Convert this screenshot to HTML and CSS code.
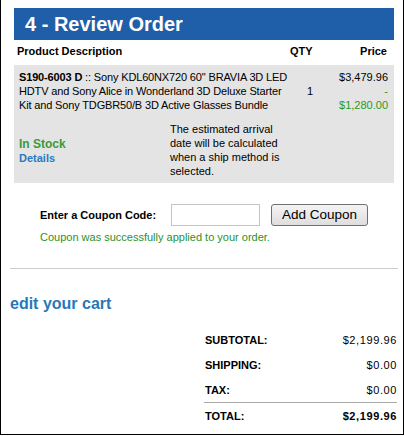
FILE: index.html
```html
<!DOCTYPE html>
<html lang="en">

<head>
  <meta charset="UTF-8" />
  <title>Review Order</title>
  <link rel="stylesheet" href="styles.css">
</head>

<body>
  <div class="pagina">
    <div class="revisao">
      <div class="titulo">4 - Review Order</div>

      <div class="cabecalho">
        <div>Product Description</div>
        <div class="cab-qtd">QTY</div>
        <div class="cab-preco">Price</div>
      </div>

      <div class="item">
        <div class="item-linha">
          <div class="descricao"><b>S190-6003 D</b> :: Sony KDL60NX720 60" BRAVIA 3D LED HDTV and Sony Alice in Wonderland 3D Deluxe Starter Kit and Sony TDGBR50/B 3D Active Glasses Bundle</div>
          <div class="qtd">1</div>
          <div class="preco">
            <div>$3,479.96</div>
            <div class="verde">-</div>
            <div class="verde">$1,280.00</div>
          </div>
        </div>
        <div class="item-linha estoque-linha">
          <div class="estoque">
            <div class="em-estoque">In Stock</div>
            <a class="detalhes" href="#">Details</a>
          </div>
          <div class="chegada">The estimated arrival date will be calculated when a ship method is selected.</div>
        </div>
      </div>
    </div>

    <div class="cupom">
      <div class="cupom-linha">
        <label class="cupom-rotulo" for="codigo">Enter a Coupon Code:</label>
        <input class="cupom-campo" id="codigo" type="text">
        <button class="cupom-botao">Add Coupon</button>
      </div>
      <div class="cupom-msg">Coupon was successfully applied to your order.</div>
    </div>

    <hr class="divisor">

    <a class="editar" href="#">edit your cart</a>

    <div class="totais">
      <div class="total-linha"><span>SUBTOTAL:</span><span class="valor">$2,199.96</span></div>
      <div class="total-linha"><span>SHIPPING:</span><span class="valor">$0.00</span></div>
      <div class="total-linha borda"><span>TAX:</span><span class="valor">$0.00</span></div>
      <div class="total-linha"><span>TOTAL:</span><span class="valor forte">$2,199.96</span></div>
    </div>
  </div>
</body>

</html>
```

FILE: styles.css
```css
body,
html {
  margin: 0;
  padding: 0;
  background: #fff;
  color: #000;
  font-family: 'Liberation Sans', Arial, sans-serif;
}

.pagina {
  width: 404px;
  height: 435px;
  box-sizing: border-box;
  border: 1px solid #000;
  border-top: none;
  overflow: hidden;
}

.revisao {
  margin: 8px 0 0 13px;
  width: 380px;
}

.titulo {
  height: 32px;
  line-height: 32px;
  background-color: #1f5fa9;
  color: #fff;
  font-size: 20px;
  font-weight: bold;
  padding-left: 11px;
}

.cabecalho {
  display: grid;
  grid-template-columns: 273px 46px 1fr;
  height: 25px;
  align-items: center;
  font-size: 11px;
  font-weight: bold;
  padding: 0 7px 3px 3px;
  box-sizing: border-box;
}

.cab-preco {
  text-align: right;
}

.item {
  background-color: #e4e4e4;
  padding: 5px 6px 5px 5px;
}

.item-linha {
  display: grid;
  grid-template-columns: 274px 34px 1fr;
  font-size: 11px;
  line-height: 14px;
}

.descricao {
  letter-spacing: -0.15px;
}

.qtd {
  align-self: center;
  padding-left: 14px;
}

.preco {
  text-align: right;
}

.verde {
  color: #1f9a1f;
}

.estoque-linha {
  grid-template-columns: 151px 120px;
  margin-top: 10px;
}

.estoque {
  align-self: center;
  padding-top: 2px;
}

.em-estoque {
  color: #3a9a3a;
  font-weight: bold;
  font-size: 12px;
  line-height: 13px;
}

.detalhes {
  color: #2a7ac0;
  font-weight: bold;
  font-size: 11px;
  text-decoration: none;
}

.cupom {
  margin-top: 20px;
  padding-left: 39px;
}

.cupom-linha {
  display: flex;
  align-items: center;
  height: 23px;
}

.cupom-rotulo {
  font-size: 11px;
  font-weight: bold;
  width: 131px;
}

.cupom-campo {
  width: 89px;
  height: 22px;
  box-sizing: border-box;
  border: 1px solid #c4c4c4;
  margin: 0;
  padding: 0 3px;
}

.cupom-botao {
  margin-left: 11px;
  width: 97px;
  height: 22px;
  border: 1px solid #707070;
  border-radius: 3px;
  background: linear-gradient(#f4f4f4, #dedede);
  font-family: 'Liberation Sans', Arial, sans-serif;
  font-size: 13.5px;
  color: #000;
  padding: 0;
}

.cupom-msg {
  margin-top: 5px;
  color: #2a922a;
  font-size: 11px;
}

.divisor {
  margin: 25px 5px 0 9px;
  border: none;
  border-top: 1px solid #cccccc;
  height: 0;
}

.editar {
  display: block;
  margin: 26px 0 0 9px;
  color: #2878b8;
  font-size: 16px;
  font-weight: bold;
  text-decoration: none;
}

.totais {
  margin: 14px 6px 0 203px;
}

.total-linha {
  display: flex;
  justify-content: space-between;
  height: 25px;
  align-items: center;
  font-size: 11px;
  font-weight: bold;
  padding-left: 1px;
}

.borda {
  border-bottom: 1px solid #aaaaaa;
}

.valor {
  font-weight: normal;
  letter-spacing: 0.6px;
}

.valor.forte {
  font-weight: bold;
}
```
